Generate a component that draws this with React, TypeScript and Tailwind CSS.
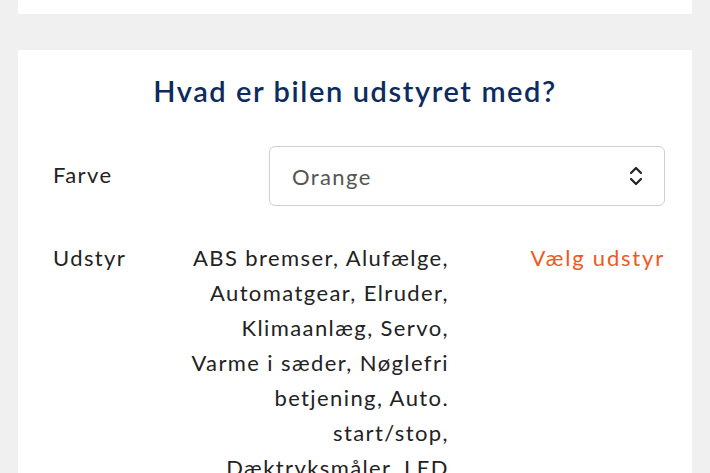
import React from "react";

export default function App() {
  const font = { fontFamily: "Lato, 'Noto Sans', sans-serif" };
  return (
    <div className="min-h-screen bg-[#f0f0f0] px-[18px] overflow-hidden" style={font}>
      <div className="h-[14px] bg-white" />
      <div className="mt-[36px] bg-white pt-[23px] pl-[35px] pr-[27px] pb-[40px]">
        <h2 className="text-center text-[29px] leading-[36px] font-semibold text-[#0d2b5e] tracking-[1.6px] pr-[8px]">
          Hvad er bilen udstyret med?
        </h2>
        <div className="mt-[37px] flex items-center">
          <div className="w-[216px] shrink-0 pb-[4px] text-[22px] tracking-[1.4px] text-[#222]">Farve</div>
          <div className="flex h-[60px] flex-1 items-center justify-between rounded-[6px] border border-[#cfcfcf] pl-[22px] pr-[20px]">
            <span className="text-[22px] tracking-[1.4px] text-[#555]">Orange</span>
            <svg width="16" height="22" viewBox="0 0 16 22" fill="none" stroke="#222" strokeWidth="2.2" strokeLinecap="round" strokeLinejoin="round">
              <path d="M3 8 L8 3 L13 8" />
              <path d="M3 14 L8 19 L13 14" />
            </svg>
          </div>
        </div>
        <div className="mt-[34px] flex items-start text-[22px] leading-[35px] tracking-[1.4px]">
          <div className="flex-1 text-[#222]">Udstyr</div>
          <div className="mr-[-2px] w-[300px] shrink-0 text-right text-[#222]">
            ABS bremser, Alufælge,<br />
            Automatgear, Elruder,<br />
            Klimaanlæg, Servo,<br />
            Varme i sæder, Nøglefri<br />
            betjening, Auto.<br />
            start/stop,<br />
            Dæktryksmåler, LED
          </div>
          <div className="w-[218px] shrink-0 text-right text-[#f4561d] tracking-[1.8px]">Vælg udstyr</div>
        </div>
      </div>
    </div>
  );
}
